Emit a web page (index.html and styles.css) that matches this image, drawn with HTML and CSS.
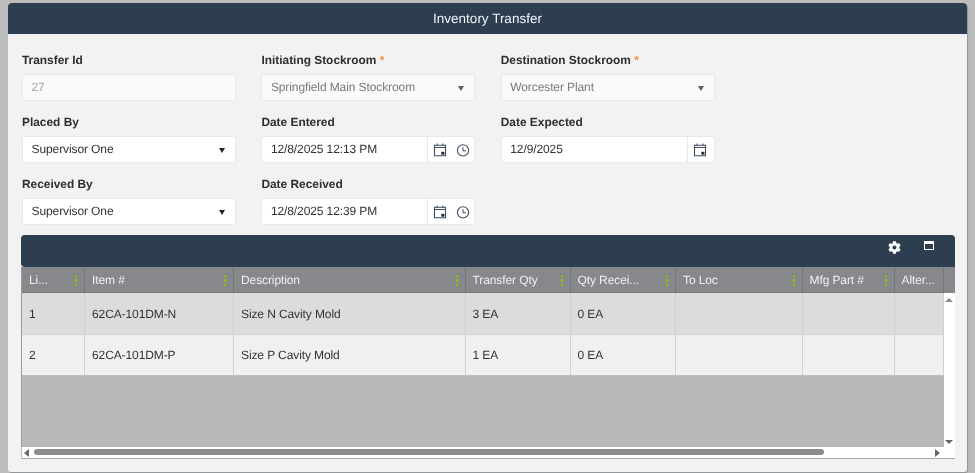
FILE: index.html
```html
<!DOCTYPE html>
<html lang="en">
<head>
<meta charset="utf-8">
<title>Inventory Transfer</title>
<link rel="stylesheet" href="styles.css">
</head>
<body>
<svg class="defs" width="0" height="0" aria-hidden="true">
  <symbol id="cal" viewBox="0 0 14 14">
    <path d="M1.5 2.2h11v10.6h-11z" fill="none" stroke="#3d4f61" stroke-width="1.1"/>
    <path d="M1.5 4h11v1H1.5z" fill="#3d4f61"/>
    <path d="M3.6 0.6h1v2.4h-1zM9.4 0.6h1v2.4h-1z" fill="#3d4f61"/>
    <path d="M8.3 8.8h3.1v2.9H8.3z" fill="#26303a"/>
  </symbol>
  <symbol id="clock" viewBox="0 0 14 14">
    <circle cx="7" cy="7.4" r="5.6" fill="none" stroke="#3d4f61" stroke-width="1.1"/>
    <path d="M7 4.2V7.8h3" fill="none" stroke="#3d4f61" stroke-width="1"/>
  </symbol>
</svg>
<main class="panel">
  <header class="title">Inventory Transfer</header>
  <div class="content">
    <form class="form">
      <div class="field">
        <label class="label">Transfer Id</label>
        <div class="control disabled"><span class="value muted">27</span></div>
      </div>
      <div class="field">
        <label class="label">Initiating Stockroom <span class="req">*</span></label>
        <div class="control disabled"><span class="value">Springfield Main Stockroom</span><span class="caret grey"></span></div>
      </div>
      <div class="field">
        <label class="label">Destination Stockroom <span class="req">*</span></label>
        <div class="control disabled"><span class="value">Worcester Plant</span><span class="caret grey"></span></div>
      </div>
      <div class="field">
        <label class="label">Placed By</label>
        <div class="control"><span class="value">Supervisor One</span><span class="caret"></span></div>
      </div>
      <div class="field">
        <label class="label">Date Entered</label>
        <div class="control"><span class="value">12/8/2025 12:13 PM</span>
          <span class="addon"><svg class="ico"><use href="#cal"/></svg><svg class="ico"><use href="#clock"/></svg></span></div>
      </div>
      <div class="field">
        <label class="label">Date Expected</label>
        <div class="control"><span class="value">12/9/2025</span>
          <span class="addon single"><svg class="ico"><use href="#cal"/></svg></span></div>
      </div>
      <div class="field">
        <label class="label">Received By</label>
        <div class="control"><span class="value">Supervisor One</span><span class="caret"></span></div>
      </div>
      <div class="field">
        <label class="label">Date Received</label>
        <div class="control"><span class="value">12/8/2025 12:39 PM</span>
          <span class="addon"><svg class="ico"><use href="#cal"/></svg><svg class="ico"><use href="#clock"/></svg></span></div>
      </div>
    </form>

    <section class="grid">
      <div class="toolbar">
        <svg class="gear" viewBox="0 0 512 512"><path fill="#fff" d="M487.4 315.7l-42.6-24.6c4.3-23.2 4.3-47 0-70.2l42.6-24.6c4.9-2.8 7.1-8.6 5.5-14-11.1-35.6-30-67.8-54.7-94.6-3.8-4.1-10-5.1-14.8-2.3L380.8 110c-17.9-15.4-38.5-27.3-60.8-35.1V25.8c0-5.6-3.9-10.5-9.4-11.7-36.7-8.2-74.3-7.8-109.2 0-5.5 1.2-9.4 6.1-9.4 11.7V75c-22.2 7.9-42.8 19.8-60.8 35.1L88.7 85.5c-4.9-2.8-11-1.9-14.8 2.3-24.7 26.7-43.6 58.9-54.7 94.6-1.7 5.4.6 11.2 5.5 14L67.3 221c-4.3 23.2-4.3 47 0 70.2l-42.6 24.6c-4.9 2.8-7.1 8.6-5.5 14 11.1 35.6 30 67.8 54.7 94.6 3.8 4.1 10 5.1 14.8 2.3l42.6-24.6c17.9 15.4 38.5 27.3 60.8 35.1v49.2c0 5.6 3.9 10.5 9.4 11.7 36.7 8.2 74.3 7.8 109.2 0 5.5-1.2 9.4-6.1 9.4-11.7v-49.2c22.2-7.9 42.8-19.8 60.8-35.1l42.6 24.6c4.9 2.8 11 1.9 14.8-2.3 24.7-26.7 43.6-58.9 54.7-94.6 1.5-5.5-.7-11.3-5.6-14.1zM256 336c-44.1 0-80-35.9-80-80s35.9-80 80-80 80 35.9 80 80-35.9 80-80 80z"/></svg>
        <span class="maxi"></span>
      </div>
      <div class="table-area">
        <table class="table">
          <colgroup>
            <col class="c1"><col class="c2"><col class="c3"><col class="c4"><col class="c5"><col class="c6"><col class="c7"><col class="c8">
          </colgroup>
          <thead>
            <tr>
              <th><span class="th-text">Li...</span><span class="dots"></span></th>
              <th><span class="th-text">Item #</span><span class="dots"></span></th>
              <th><span class="th-text">Description</span><span class="dots"></span></th>
              <th><span class="th-text">Transfer Qty</span><span class="dots"></span></th>
              <th><span class="th-text">Qty Recei...</span><span class="dots"></span></th>
              <th><span class="th-text">To Loc</span><span class="dots"></span></th>
              <th><span class="th-text">Mfg Part #</span><span class="dots"></span></th>
              <th><span class="th-text">Alter...</span></th>
            </tr>
          </thead>
          <tbody>
            <tr class="odd"><td>1</td><td>62CA-101DM-N</td><td>Size N Cavity Mold</td><td>3 EA</td><td>0 EA</td><td></td><td></td><td></td></tr>
            <tr class="even"><td>2</td><td>62CA-101DM-P</td><td>Size P Cavity Mold</td><td>1 EA</td><td>0 EA</td><td></td><td></td><td></td></tr>
          </tbody>
        </table>
        <div class="vbar"><span class="vhead"></span><span class="arrow up"></span><span class="arrow down"></span></div>
      </div>
      <div class="hbar"><span class="arrow left"></span><span class="thumb"></span><span class="arrow right"></span></div>
    </section>
  </div>
</main>
</body>
</html>
```
FILE: styles.css
```css
* { box-sizing: border-box; }
html, body { height: 100%; }
body {
  margin: 0;
  padding: 3px 8px 1px 8px;
  background: #bcbcbc;
  font-family: "Liberation Sans", Arial, sans-serif;
  color: #333;
  overflow: hidden;
  text-rendering: geometricPrecision;
}
.defs { position: absolute; }
.panel {
  height: 469px;
  background: #f2f2f2;
  border-radius: 4px 4px 3px 3px;
  box-shadow: 1px 1px 1px #8f9396;
  display: flex;
  flex-direction: column;
  filter: blur(0.3px);
}
.title {
  height: 31px;
  background: #2c3e50;
  color: #f2f4f6;
  border-radius: 4px 4px 0 0;
  font-size: 13.5px;
  line-height: 31px;
  text-align: center;
}
.content { padding: 19px 13px 0 14px; flex: 1; }
.form {
  display: grid;
  grid-template-columns: repeat(3, 214px);
  column-gap: 25.4px;
  row-gap: 9px;
}
.field { height: 53px; }
.label {
  display: block;
  height: 21px;
  font-size: 11.9px;
  font-weight: bold;
  line-height: 14px;
  color: #2e2e2e;
}
.req { color: #f5923e; }
.control {
  height: 27px;
  display: flex;
  align-items: center;
  background: #fff;
  border: 1px solid #e9e9e9;
  border-radius: 3px;
  font-size: 12px;
  letter-spacing: -0.1px;
}
.control.disabled { background: #fafafa; color: #7a7a7a; }
.value { flex: 1; padding: 0 0 2px 8.5px; }
.muted { color: #a3a3a3; }
.caret {
  width: 0;
  height: 0;
  margin-right: 10px;
  margin-top: 2px;
  border-left: 3.5px solid transparent;
  border-right: 3.5px solid transparent;
  border-top: 5px solid #222;
}
.caret.grey { border-top-color: #5f5f5f; }
.addon {
  height: 100%;
  width: 47px;
  border-left: 1px solid #e9e9e9;
  display: flex;
  align-items: center;
  gap: 9px;
  padding-left: 5px;
}
.addon.single { width: 27px; }
.ico { width: 14px; height: 14px; }
.grid { margin-top: 5px; width: 934px; margin-left: -1px; }
.toolbar {
  height: 32px;
  background: #2c3e50;
  border-radius: 4px 4px 0 4px;
  display: flex;
  justify-content: flex-end;
  padding: 6px 21px 0 0;
  gap: 23px;
}
.gear { width: 13px; height: 13px; }
.maxi {
  width: 10px;
  height: 9px;
  border: 1px solid #fff;
  border-top-width: 3px;
}
.table-area { display: flex; height: 180px; background: #b9b9b9; border-left: 1px solid #9a9a9a; }
.table {
  width: 922px;
  table-layout: fixed;
  border-collapse: separate;
  border-spacing: 0;
  align-self: flex-start;
  font-size: 12px;
  letter-spacing: -0.1px;
}
.c1 { width: 63px; }
.c2 { width: 149px; }
.c3 { width: 231.5px; }
.c4 { width: 105px; }
.c5 { width: 105.5px; }
.c6 { width: 126.5px; }
.c7 { width: 92px; }
.c8 { width: 49.5px; }
th {
  height: 26px;
  background: #87888c;
  color: #f0f0f0;
  font-weight: normal;
  text-align: left;
  padding: 0 0 0 7px;
  border-right: 1px solid #73767b;
  border-bottom: 1px solid #777;
  position: relative;
  white-space: nowrap;
  overflow: hidden;
}
td {
  padding: 0 0 0 7px;
  border-right: 1px solid #d0d0d0;
  border-bottom: 1px solid #d4d4d4;
  color: #333;
}
.odd td { height: 42px; background: #dcdcdc; }
.even td { height: 41px; background: #f0f0f0; border-bottom-color: #bdbdbd; }
.dots {
  position: absolute;
  right: 7px;
  top: 8px;
  width: 2px;
  height: 11px;
  background: repeating-linear-gradient(#86c400 0 2px, transparent 2px 4.5px);
}
.vbar { width: 11px; background: #fff; position: relative; }
.vhead { position: absolute; top: 0; left: 0; width: 11px; height: 26px; background: #87888c; display: block; }
.arrow { position: absolute; width: 0; height: 0; }
.arrow.up { top: 31px; left: 1px; border: 4px solid transparent; border-top: 0; border-bottom: 4px solid #8a8a8a; }
.arrow.down { bottom: 3px; left: 1px; border: 4px solid transparent; border-bottom: 0; border-top: 4px solid #666; }
.hbar {
  height: 12px;
  background: #fff;
  position: relative;
  border-bottom: 1px solid #a5a5a5;
  border-left: 1px solid #c0c0c0;
}
.arrow.left { left: 2px; top: 2px; border: 4px solid transparent; border-left: 0; border-right: 5px solid #666; }
.arrow.right { right: 15px; top: 2px; border: 4px solid transparent; border-right: 0; border-left: 5px solid #666; }
.thumb {
  position: absolute;
  left: 12px;
  top: 2px;
  width: 790px;
  height: 6px;
  background: #8c8c8c;
  border-radius: 3px;
}
```
